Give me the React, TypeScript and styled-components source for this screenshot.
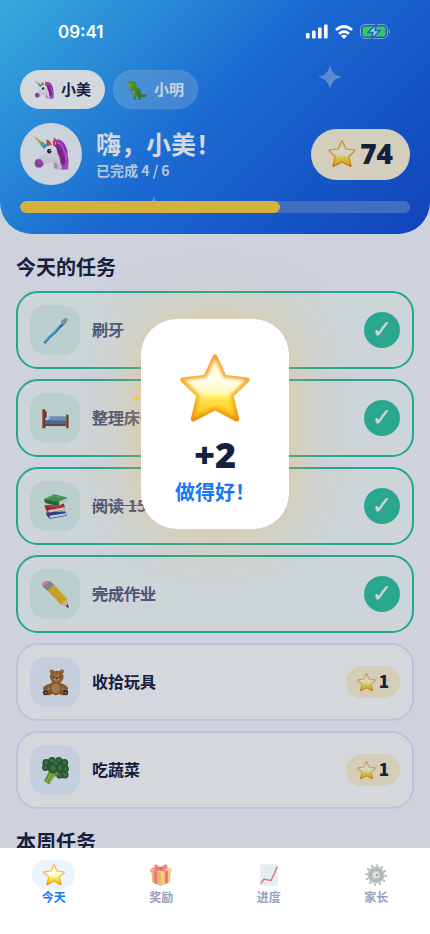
import React from "react";
import styled, { createGlobalStyle } from "styled-components";

const CJK = '"Noto Sans CJK SC", "Noto Sans", sans-serif';

const GlobalStyle = createGlobalStyle`
  * { box-sizing: border-box; }
  body { margin: 0; background: #f7f9ff; font-family: ${CJK}; color: #14203f; }
  h1, h2, p, ul { margin: 0; padding: 0; }
  button { font: inherit; color: inherit; border: 0; padding: 0; background: none; cursor: pointer; }
`;

/* ---------- emoji drawings ---------- */

const Glyph = styled.svg<{ $size: number }>`
  display: block;
  flex: none;
  width: ${(p) => p.$size}px;
  height: ${(p) => p.$size}px;
`;

const HiddenDefs = styled.svg`
  position: absolute;
  width: 0;
  height: 0;
`;

const STAR = "M50 4 L63 33 L96 37 L73 59 L81 93 L50 77 L19 93 L27 59 L4 37 L37 33 Z";

const Defs = () => (
  <HiddenDefs aria-hidden="true">
    <defs>
      <linearGradient id="starEdge" x1="0" y1="0" x2="0" y2="1">
        <stop offset="0" stopColor="#f9a13a" />
        <stop offset=".4" stopColor="#fbab35" />
        <stop offset=".65" stopColor="#fbb81e" />
        <stop offset="1" stopColor="#ee8f12" />
      </linearGradient>
      <linearGradient id="starCore" x1="0" y1="0" x2="0" y2="1">
        <stop offset="0" stopColor="#fff3c0" />
        <stop offset=".35" stopColor="#ffffec" />
        <stop offset=".6" stopColor="#fff9b4" />
        <stop offset=".68" stopColor="#ffe650" />
        <stop offset="1" stopColor="#ffc01a" />
      </linearGradient>
      <filter id="starSoft" x="-10%" y="-10%" width="120%" height="120%">
        <feGaussianBlur stdDeviation="2.2" />
      </filter>
      <linearGradient id="mane" x1="0" y1="0" x2="1" y2="1">
        <stop offset="0" stopColor="#d04bd8" />
        <stop offset=".5" stopColor="#a92cc4" />
        <stop offset="1" stopColor="#c25ad8" />
      </linearGradient>
      <linearGradient id="horse" x1="0" y1="0" x2="0" y2="1">
        <stop offset="0" stopColor="#ffffff" />
        <stop offset="1" stopColor="#ded9ea" />
      </linearGradient>
      <linearGradient id="horn" x1="0" y1="0" x2="1" y2="1">
        <stop offset="0" stopColor="#f0565c" />
        <stop offset=".3" stopColor="#f4c143" />
        <stop offset=".55" stopColor="#5abf65" />
        <stop offset=".8" stopColor="#4fa4e8" />
        <stop offset="1" stopColor="#9a62d0" />
      </linearGradient>
      <linearGradient id="pencilBody" x1="0" y1="1" x2="1" y2="0">
        <stop offset="0" stopColor="#d88b09" />
        <stop offset=".5" stopColor="#fbc52d" />
        <stop offset="1" stopColor="#f2a90e" />
      </linearGradient>
      <radialGradient id="fur">
        <stop offset="0" stopColor="#c98a46" />
        <stop offset="1" stopColor="#9a5d22" />
      </radialGradient>
      <radialGradient id="leaf">
        <stop offset="0" stopColor="#4f9147" />
        <stop offset="1" stopColor="#24572b" />
      </radialGradient>
      <linearGradient id="dino" x1="0" y1="0" x2="1" y2="1">
        <stop offset="0" stopColor="#79b729" />
        <stop offset="1" stopColor="#2f7c1b" />
      </linearGradient>
    </defs>
  </HiddenDefs>
);

const Star = ({ size }: { size: number }) => (
  <Glyph $size={size} viewBox="0 0 100 100" aria-hidden="true">
    <path d={STAR} fill="url(#starEdge)" stroke="url(#starEdge)" strokeWidth="7" strokeLinejoin="round" />
    <path
      d={STAR}
      fill="url(#starCore)"
      stroke="url(#starCore)"
      strokeWidth="3"
      strokeLinejoin="round"
      filter="url(#starSoft)"
      transform="translate(6 6) scale(.88)"
    />
  </Glyph>
);

const Unicorn = ({ size }: { size: number }) => (
  <Glyph $size={size} viewBox="-2 0 64 64" aria-hidden="true">
    <path d="M33 9C43 3 52 8 56 18C61 26 59 34 61 41C62 47 60 52 61 59C56 59 52 61 45 58L34 20Z" fill="url(#mane)" />
    <path d="M0 1L25 17L18 24Z" fill="url(#horn)" />
    <path d="M6 6l3-2M10 11l5-3M14 17l6-5" stroke="#fff" strokeWidth="1" opacity=".6" />
    <path d="M23 18L22 6Q30 8 32 18ZM34 18L35 2Q42 8 41 19Z" fill="#cf3f62" />
    <path d="M27 16l-2-5q4 2 4 6ZM37 16l0-8q3 5 2 10Z" fill="#f7a3ba" />
    <path d="M20 21C26 14 36 15 40 22C46 30 44 44 50 56C46 61 40 61 35 57C37 51 34 46 29 47C25 48 19 50 15 54C9 59 1 56 1 48C3 42 12 36 15 29C16 25 18 23 20 21Z" fill="url(#horse)" />
    <path d="M3 42C9 39 15 42 16 48C17 53 13 57 7 56C1 55-1 48 3 42Z" fill="#a84fbb" />
    <circle cx="5" cy="47" r="1.400" fill="#65256f" />
    <path d="M7 53q4 0 7-3" fill="none" stroke="#7f3390" strokeWidth="1.400" />
    <ellipse cx="27" cy="27" rx="3.800" ry="4.200" fill="#221e2d" />
    <circle cx="28" cy="25.500" r="1.200" fill="#fff" />
    <path d="M36 17C43 22 39 31 45 36C49 40 45 48 52 52C57 48 57 38 52 33C48 28 50 20 42 14Z" fill="#93249f" />
    <path d="M42 12q9 2 11 14q5 6 4 17" fill="none" stroke="#dd7de8" strokeWidth="1.600" />
    <path d="M35 57q2-7-1-10q8 0 8 8q-1 5-7 2Z" fill="#c991ad" opacity=".8" />
  </Glyph>
);

const Dino = ({ size }: { size: number }) => (
  <Glyph $size={size} viewBox="0 0 64 64" aria-hidden="true">
    <path d="M2 10C5 2 16 0 23 4C30 8 29 17 30 23C40 25 43 33 45 41C48 49 55 50 64 44C63 53 55 58 45 54L43 60L47 63H37L36 53L29 51L27 58L31 62H20L22 49C16 44 15 35 17 28L14 23L5 22L2 18L13 16L3 14Z" fill="url(#dino)" />
    <path d="M18 29C16 37 19 45 27 49L23 37Z" fill="#a9c653" />
    <path d="M17 28l-7 2-1 4 3-2 1 3 2-3 5-1Z" fill="#4d8f20" />
    <path d="M25 6q6 7 5 15q10 3 14 15" fill="none" stroke="#276817" strokeWidth="2" strokeDasharray="3 3" />
    <path d="M34 36q8 3 4 13" fill="none" stroke="#28681a" strokeWidth="2" />
    <path d="M5 15l2 2 2-2 2 2 2-2" stroke="#fff" strokeWidth="1" fill="none" />
    <circle cx="14" cy="8" r="1.500" fill="#222" />
  </Glyph>
);

const Toothbrush = ({ size }: { size: number }) => (
  <Glyph $size={size} viewBox="0 0 64 64" aria-hidden="true">
    <path d="M7 60C14 53 17 47 24 42C31 38 35 30 41 25L54 13" fill="none" stroke="#2288bd" strokeWidth="6" strokeLinecap="round" />
    <path d="M7 58C14 51 17 46 23 41C30 37 34 29 39 25" fill="none" stroke="#66d0ef" strokeWidth="2.500" strokeLinecap="round" />
    <path d="M44 11L53 3L61 3L60 10L51 19Z" fill="#a6a9b5" />
    <path d="M48 11l4 4M51 8l4 4M54 5l4 4" stroke="#777b88" strokeWidth="1.500" />
  </Glyph>
);

const Bed = ({ size }: { size: number }) => (
  <Glyph $size={size} viewBox="0 0 64 64" aria-hidden="true">
    <path d="M5 31L17 27H57V46H6Z" fill="#6c93c4" />
    <path d="M5 33Q8 27 18 28L22 32L9 36Z" fill="#e6eaf2" />
    <path d="M6 36H58V47H6Z" fill="#5279b0" />
    <path d="M17 28H56V37H20Z" fill="#7ea6d4" />
    <path d="M5 43H60V50H5Z" fill="#8a4b2e" />
    <path d="M5 43H60V45H5Z" fill="#b86d45" />
    <path d="M1 10H7L8 55H1ZM57 23H63V55H57Z" fill="#824026" />
    <path d="M1 10H3V55H1ZM57 23H59V55H57Z" fill="#b36c43" />
    <path d="M7 13l4 3v12l-4 5" fill="#75402a" />
  </Glyph>
);

const Books = ({ size }: { size: number }) => (
  <Glyph $size={size} viewBox="0 0 64 64" aria-hidden="true">
    <path d="M9 46L55 43L59 54L19 61Q12 57 9 46Z" fill="#24509f" />
    <path d="M17 54L57 48V53L20 59Z" fill="#eef0f6" />
    <path d="M6 29L52 25L55 39L16 48Q8 43 6 29Z" fill="#c62931" />
    <path d="M14 41L54 34V39L17 46Z" fill="#f4eee8" />
    <path d="M13 42L55 34" stroke="#bcb6ae" />
    <path d="M5 14L29 3L61 11L41 21Z" fill="#4ba650" />
    <path d="M5 14L41 21L41 30L12 25Q4 22 5 14Z" fill="#24783b" />
    <path d="M41 21L61 11V18L41 30Z" fill="#e5eee0" />
    <path d="M41 25L61 15" stroke="#a0afa0" />
    <path d="M13 14L29 7L46 11" fill="none" stroke="#7acb75" strokeWidth="2" />
    <path d="M16 32l29-2" stroke="#ed6462" strokeWidth="2" />
  </Glyph>
);

const Pencil = ({ size }: { size: number }) => (
  <Glyph $size={size} viewBox="0 0 64 64" aria-hidden="true">
    <path d="M12 22L27 7L60 42L45 56Z" fill="url(#pencilBody)" />
    <path d="M17 17L50 51M22 12L55 47" stroke="#bd790a" strokeWidth="1.200" />
    <path d="M45 56Q48 50 52 50Q54 45 60 42L63 63Z" fill="#f2ce9e" />
    <path d="M56 60L61 55L64 64Z" fill="#31302f" />
    <path d="M5 16L20 1L28 8L13 23Z" fill="#72899a" />
    <path d="M8 18L22 4M11 21L26 7" stroke="#d6e3e8" strokeWidth="1.500" />
    <path d="M5 17C0 12-1 7 5 2Q11-2 17 0L20 2Z" fill="#e77f91" />
    <path d="M4 8q5-6 10-4" stroke="#ffb8c4" strokeWidth="2" fill="none" />
  </Glyph>
);

const Bear = ({ size }: { size: number }) => (
  <Glyph $size={size} viewBox="0 0 64 64" aria-hidden="true">
    <circle cx="23" cy="6" r="5" fill="url(#fur)" />
    <circle cx="47" cy="6" r="5" fill="url(#fur)" />
    <path d="M22 34Q11 36 4 42Q0 50 7 50L24 43ZM45 34Q53 36 60 42Q65 50 57 50L43 43Z" fill="url(#fur)" />
    <ellipse cx="33" cy="45" rx="16" ry="17" fill="url(#fur)" />
    <ellipse cx="35" cy="19" rx="16" ry="15" fill="url(#fur)" />
    <ellipse cx="33" cy="46" rx="10" ry="11" fill="#c78d50" />
    <ellipse cx="35" cy="25" rx="6" ry="5" fill="#dba971" />
    <ellipse cx="35" cy="22" rx="3" ry="2" fill="#2e2118" />
    <circle cx="28" cy="19" r="1.800" fill="#2e2118" />
    <circle cx="42" cy="19" r="1.800" fill="#2e2118" />
    <path d="M31 27q4 3 8 0" stroke="#6e431d" fill="none" />
    <ellipse cx="14" cy="55" rx="11" ry="7" fill="#9a6029" />
    <ellipse cx="51" cy="55" rx="11" ry="7" fill="#9a6029" />
    <ellipse cx="8" cy="56" rx="6" ry="6" fill="#453427" />
    <ellipse cx="56" cy="56" rx="6" ry="6" fill="#453427" />
    <ellipse cx="8" cy="57" rx="2.500" ry="2.500" fill="#b88450" />
    <ellipse cx="56" cy="57" rx="2.500" ry="2.500" fill="#b88450" />
  </Glyph>
);

const Broccoli = ({ size }: { size: number }) => (
  <Glyph $size={size} viewBox="0 0 64 64" aria-hidden="true">
    <g fill="url(#leaf)">
      <circle cx="10" cy="14" r="9" />
      <circle cx="24" cy="9" r="9" />
      <circle cx="40" cy="8" r="8" />
      <circle cx="53" cy="14" r="9" />
      <circle cx="56" cy="28" r="8" />
      <circle cx="54" cy="42" r="9" />
      <circle cx="42" cy="43" r="8" />
      <circle cx="8" cy="25" r="8" />
      <circle cx="42" cy="25" r="12" />
    </g>
    <path d="M18 30L5 57L17 65L28 48L40 40L34 30Z" fill="#6fae29" />
    <path d="M22 38L11 58M29 40L17 60" stroke="#a5d44f" strokeWidth="3" />
    <circle cx="26" cy="26" r="13" fill="url(#leaf)" />
  </Glyph>
);

const Gift = ({ size }: { size: number }) => (
  <Glyph $size={size} viewBox="0 0 64 64" aria-hidden="true">
    <path d="M4 21L31 31V63L7 54ZM60 21L31 31V63L57 53Z" fill="#d98f1c" />
    <path d="M60 21L31 31V63L57 53Z" fill="#e8ab33" />
    <path d="M1 14L32 5L63 14V23L31 33L1 23Z" fill="#f0b945" />
    <path d="M1 15L31 25V33L1 23Z" fill="#cf8a1c" />
    <path d="M12 18L20 21V59L13 56ZM43 22L52 19V55L44 58Z" fill="#d82c3c" />
    <path d="M12 17L44 8L53 11L20 21ZM11 10L52 20L43 23L3 13Z" fill="#e93d4b" />
    <path d="M31 14C22-3 9-2 14 11C17 17 25 17 31 14ZM32 14C38-3 54-2 49 10C45 17 38 17 32 14Z" fill="#e52d3f" />
    <path d="M19 10q-1-7 8 1M36 11q7-9 9-1" stroke="#ff909b" strokeWidth="2" fill="none" />
    <rect x="27" y="9" width="9" height="8" rx="3" fill="#bc1f30" />
  </Glyph>
);

const Chart = ({ size }: { size: number }) => (
  <Glyph $size={size} viewBox="0 0 64 64" aria-hidden="true">
    <rect x="6" y="1" width="52" height="62" rx="1" fill="#d9e6ec" />
    <path d="M6 12H58M6 24H58M6 36H58M6 48H58M19 1V63M32 1V63M45 1V63" stroke="#c8dae2" strokeWidth="1" />
    <path d="M8 57L17 44L38 48L56 8" fill="none" stroke="#d91d2b" strokeWidth="4" strokeLinejoin="round" />
  </Glyph>
);

const Gear = ({ size }: { size: number }) => (
  <Glyph $size={size} viewBox="0 0 64 64" aria-hidden="true">
    <circle cx="32" cy="32" r="28" fill="none" stroke="#818b8d" strokeWidth="7" strokeDasharray="5 9.660" />
    <circle cx="32" cy="32" r="18" fill="none" stroke="#899294" strokeWidth="13" />
    <circle cx="32" cy="32" r="22" fill="none" stroke="#b3babc" strokeWidth="2" />
    <circle cx="32" cy="32" r="12" fill="#a7adae" />
    <circle cx="32" cy="32" r="8" fill="#e3e7e8" />
    <circle cx="34" cy="32" r="4" fill="#6d7476" />
  </Glyph>
);

/* ---------- shell ---------- */

const Shell = styled.div`
  height: 100vh;
  display: flex;
  flex-direction: column;
`;

const Screen = styled.main`
  position: relative;
  flex: 1;
  min-height: 0;
  overflow: hidden;
`;

const Header = styled.header`
  position: relative;
  padding: 0 20px 21px;
  border-radius: 0 0 32px 32px;
  background: linear-gradient(135deg, #40c9ff 0%, #1d78f2 50%, #114bd6 100%);
  color: #fff;
`;

const Twinkle = styled.svg<{ $left: string; $top: number; $size: number }>`
  position: absolute;
  left: ${(p) => p.$left};
  top: ${(p) => p.$top}px;
  width: ${(p) => p.$size}px;
  height: ${(p) => p.$size}px;
  fill: rgba(255, 255, 255, 0.36);
`;

const StatusBar = styled.div`
  position: relative;
  z-index: 3;
  display: flex;
  align-items: center;
  justify-content: space-between;
  height: 70px;
  padding: 0 20px 7px 38px;
`;

const Clock = styled.span`
  font: 600 17px/24px Inter, sans-serif;
`;

const Signals = styled.div`
  display: flex;
  align-items: center;
  gap: 7px;
`;

const Pills = styled.div`
  display: flex;
  gap: 8px;
  margin-bottom: 14px;
`;

const ProfilePill = styled.button<{ $active?: boolean }>`
  && {
    display: flex;
    align-items: center;
    gap: 7px;
    height: 39px;
    padding: 0 13px;
    border-radius: 20px;
    font-size: 15px;
    line-height: 20px;
    font-weight: 700;
    background: ${(p) => (p.$active ? "#fff" : "rgba(255, 255, 255, 0.2)")};
    border: 1px solid ${(p) => (p.$active ? "#fff" : "rgba(255, 255, 255, 0.06)")};
    color: ${(p) => (p.$active ? "#14203f" : "#f4f8ff")};
  }
`;

const PillLabel = styled.span`
  padding-bottom: 2px;
`;

const Greeting = styled.div`
  display: flex;
  align-items: center;
  gap: 14px;
  margin-bottom: 16px;
`;

const Avatar = styled.div`
  display: grid;
  place-items: center;
  width: 62px;
  height: 62px;
  border-radius: 50%;
  background: #f4faff;
`;

const GreetingText = styled.div`
  flex: 1;
  padding-top: 2px;
`;

const Title = styled.h1`
  font-size: 25px;
  line-height: 30px;
  font-weight: 700;
  white-space: nowrap;
`;

const Subtitle = styled.p`
  font-size: 14px;
  line-height: 24px;
  font-weight: 700;
  color: rgba(255, 255, 255, 0.84);
`;

const Total = styled.div`
  display: flex;
  align-items: center;
  gap: 4px;
  height: 51px;
  padding: 0 17px;
  border-radius: 26px;
  background: #fff6d8;
  color: #14203f;
  font: 900 28px/36px "Noto Sans", sans-serif;
`;

const TotalCount = styled.span`
  padding-bottom: 2px;
`;

const Progress = styled.div`
  position: relative;
  height: 12px;
  border-radius: 6px;
  background: #4b7fe0;
  overflow: hidden;
`;

const ProgressFill = styled.div`
  height: 100%;
  border-radius: 6px;
  background: #ffd140;
`;

/* ---------- tasks ---------- */

const Tasks = styled.section`
  padding: 18px 16px 0;
`;

const SectionTitle = styled.h2`
  font-size: 20px;
  line-height: 30px;
  font-weight: 700;
  margin-bottom: 9px;
`;

const List = styled.ul`
  display: grid;
  gap: 10px;
  margin-bottom: 18px;
  list-style: none;
`;

const Card = styled.li<{ $done: boolean }>`
  display: flex;
  align-items: center;
  gap: 12px;
  padding: 12px;
  border: 2px solid ${(p) => (p.$done ? "#28c59b" : "#e2eaf6")};
  border-radius: 22px;
  background: ${(p) => (p.$done ? "#f7fdfb" : "#fff")};
`;

const Tile = styled.div<{ $done: boolean }>`
  display: grid;
  place-items: center;
  width: 50px;
  height: 50px;
  border-radius: 16px;
  background: ${(p) => (p.$done ? "#e1f6f0" : "#ecf5ff")};
`;

const TaskName = styled.span<{ $done: boolean }>`
  flex: 1;
  padding-bottom: 2px;
  font-size: 16px;
  line-height: 24px;
  font-weight: 700;
  color: ${(p) => (p.$done ? "#5a6385" : "#14203f")};
  text-decoration: ${(p) => (p.$done ? "line-through" : "none")};
`;

const Check = styled.button`
  && {
    display: grid;
    place-items: center;
    width: 36px;
    height: 36px;
    border-radius: 50%;
    background: #30c6a2;
    color: #fff;
    font: 25px/36px "DejaVu Sans", sans-serif;
  }
`;

const Reward = styled.button`
  && {
    display: flex;
    align-items: center;
    gap: 3px;
    height: 32px;
    padding: 0 11px;
    border-radius: 16px;
    background: #fff5d4;
    font-size: 17px;
    line-height: 24px;
    font-weight: 900;
  }
`;

const RewardCount = styled.span`
  padding-bottom: 2px;
`;

/* ---------- celebration ---------- */

const Scrim = styled.div`
  position: absolute;
  inset: 0;
  z-index: 2;
  display: grid;
  place-items: center;
  background: rgba(15, 31, 61, 0.18);
`;

const Celebration = styled.div`
  position: relative;
  display: flex;
  flex-direction: column;
  align-items: center;
  padding: 35px 34px 23px;
  border-radius: 36px;
  background: #fff;
  box-shadow: 0 0 60px rgba(255, 180, 70, 0.46);
`;

const Sparkles = styled.svg`
  position: absolute;
  left: -8px;
  top: 66px;
  width: 20px;
  height: 20px;
  clip-path: inset(0 12px 0 0);
`;

const Points = styled.p`
  margin-top: 8px;
  font: 900 36px/46px "Noto Sans", sans-serif;
`;

const Praise = styled.p`
  font-size: 20px;
  line-height: 28px;
  font-weight: 700;
  color: #1877f8;
`;

/* ---------- tab bar ---------- */

const TabBar = styled.nav`
  display: grid;
  grid-template-columns: repeat(4, 1fr);
  height: 86px;
  padding-top: 12px;
  background: #fff;
`;

const Tab = styled.button<{ $active?: boolean }>`
  && {
    display: flex;
    flex-direction: column;
    align-items: center;
    font-size: 12px;
    line-height: 16px;
    font-weight: 700;
    color: ${(p) => (p.$active ? "#1877f8" : "#97a2c0")};
  }
`;

const TabIcon = styled.span<{ $active?: boolean }>`
  display: grid;
  place-items: center;
  width: 43px;
  height: 29px;
  border-radius: 15px;
  background: ${(p) => (p.$active ? "#e9f4ff" : "transparent")};

  svg {
    opacity: ${(p) => (p.$active ? 1 : 0.65)};
  }
`;

type GlyphType = React.ComponentType<{ size: number }>;

const tasks: { name: string; icon: GlyphType; done: boolean; stars: number }[] = [
  { name: "刷牙", icon: Toothbrush, done: true, stars: 1 },
  { name: "整理床铺", icon: Bed, done: true, stars: 1 },
  { name: "阅读 15 分钟", icon: Books, done: true, stars: 2 },
  { name: "完成作业", icon: Pencil, done: true, stars: 2 },
  { name: "收拾玩具", icon: Bear, done: false, stars: 1 },
  { name: "吃蔬菜", icon: Broccoli, done: false, stars: 1 },
];

const tabs: { label: string; icon: GlyphType }[] = [
  { label: "今天", icon: Star },
  { label: "奖励", icon: Gift },
  { label: "进度", icon: Chart },
  { label: "家长", icon: Gear },
];

const TWINKLE = "M12 0C13.500 7 17 10.500 24 12C17 13.500 13.500 17 12 24C10.500 17 7 13.500 0 12C7 10.500 10.500 7 12 0Z";

const StatusIcons = () => (
  <Signals aria-hidden="true">
    <svg width="22" height="15" viewBox="0 0 22 15" fill="#fff">
      <rect x="0" y="9" width="3.600" height="5.500" rx="1.200" />
      <rect x="6" y="6.500" width="3.600" height="8" rx="1.200" />
      <rect x="12" y="3.500" width="3.600" height="11" rx="1.200" />
      <rect x="18" y=".5" width="3.600" height="14" rx="1.200" />
    </svg>
    <svg width="18" height="14" viewBox="0 0 18 14" fill="none" stroke="#fff" strokeWidth="2.700">
      <path d="M1 5Q9-2 17 5M4 8.700Q9 4.500 14 8.700" />
      <path d="M9 14L6 11Q9 8.700 12 11Z" fill="#fff" stroke="none" />
    </svg>
    <svg width="30" height="15" viewBox="0 0 30 15">
      <rect x=".5" y=".5" width="27" height="14" rx="4.500" fill="none" stroke="#fff" strokeOpacity=".4" />
      <path d="M29 5Q31 7.500 29 10Z" fill="#fff" opacity=".5" />
      <rect x="2.500" y="2.500" width="23" height="10" rx="2.800" fill="#35c759" />
      <path d="M16.500 0L8 8.500H13L11.500 15L20 6.500H15Z" fill="#a6c8f2" stroke="#1c60cc" strokeWidth="1.400" />
    </svg>
  </Signals>
);

export default function App() {
  const done = tasks.filter((t) => t.done).length;
  return (
    <Shell>
      <GlobalStyle />
      <Defs />
      <Screen>
        <Header>
          <Twinkle viewBox="0 0 24 24" $left="74%" $top={65} $size={24} aria-hidden="true">
            <path d={TWINKLE} />
          </Twinkle>
          <Twinkle viewBox="0 0 24 24" $left="34%" $top={196} $size={16} aria-hidden="true">
            <path d={TWINKLE} />
          </Twinkle>
          <StatusBar>
            <Clock>09:41</Clock>
            <StatusIcons />
          </StatusBar>
          <Pills>
            <ProfilePill $active aria-pressed="true">
              <Unicorn size={20} />
              <PillLabel>小美</PillLabel>
            </ProfilePill>
            <ProfilePill aria-pressed="false">
              <Dino size={20} />
              <PillLabel>小明</PillLabel>
            </ProfilePill>
          </Pills>
          <Greeting>
            <Avatar>
              <Unicorn size={36} />
            </Avatar>
            <GreetingText>
              <Title>嗨，小美！</Title>
              <Subtitle>
                已完成 {done} / {tasks.length}
              </Subtitle>
            </GreetingText>
            <Total>
              <Star size={28} />
              <TotalCount>74</TotalCount>
            </Total>
          </Greeting>
          <Progress role="progressbar" aria-valuenow={done} aria-valuemax={tasks.length} aria-label="已完成">
            <ProgressFill style={{ width: `${(done / tasks.length) * 100}%` }} />
          </Progress>
        </Header>

        <Tasks>
          <SectionTitle>今天的任务</SectionTitle>
          <List>
            {tasks.map(({ name, icon: Icon, done: isDone, stars }) => (
              <Card key={name} $done={isDone}>
                <Tile $done={isDone}>
                  <Icon size={27} />
                </Tile>
                <TaskName $done={isDone}>{name}</TaskName>
                {isDone ? (
                  <Check aria-label={name}>✓</Check>
                ) : (
                  <Reward>
                    <Star size={19} />
                    <RewardCount>{stars}</RewardCount>
                  </Reward>
                )}
              </Card>
            ))}
          </List>
          <SectionTitle>本周任务</SectionTitle>
        </Tasks>

        <Scrim>
          <Celebration role="dialog" aria-label="做得好！">
            <Sparkles viewBox="0 0 20 20" fill="#fbc02d" aria-hidden="true">
              <path d="M4 9l1 3 3 1-3 1-1 3-1-3-3-1 3-1ZM3 2l7 3-1 2Z" />
            </Sparkles>
            <Star size={70} />
            <Points>+2</Points>
            <Praise>做得好！</Praise>
          </Celebration>
        </Scrim>
      </Screen>

      <TabBar>
        {tabs.map(({ label, icon: Icon }, i) => (
          <Tab key={label} $active={i === 0} aria-current={i === 0 ? "page" : undefined}>
            <TabIcon $active={i === 0}>
              <Icon size={22} />
            </TabIcon>
            {label}
          </Tab>
        ))}
      </TabBar>
    </Shell>
  );
}
